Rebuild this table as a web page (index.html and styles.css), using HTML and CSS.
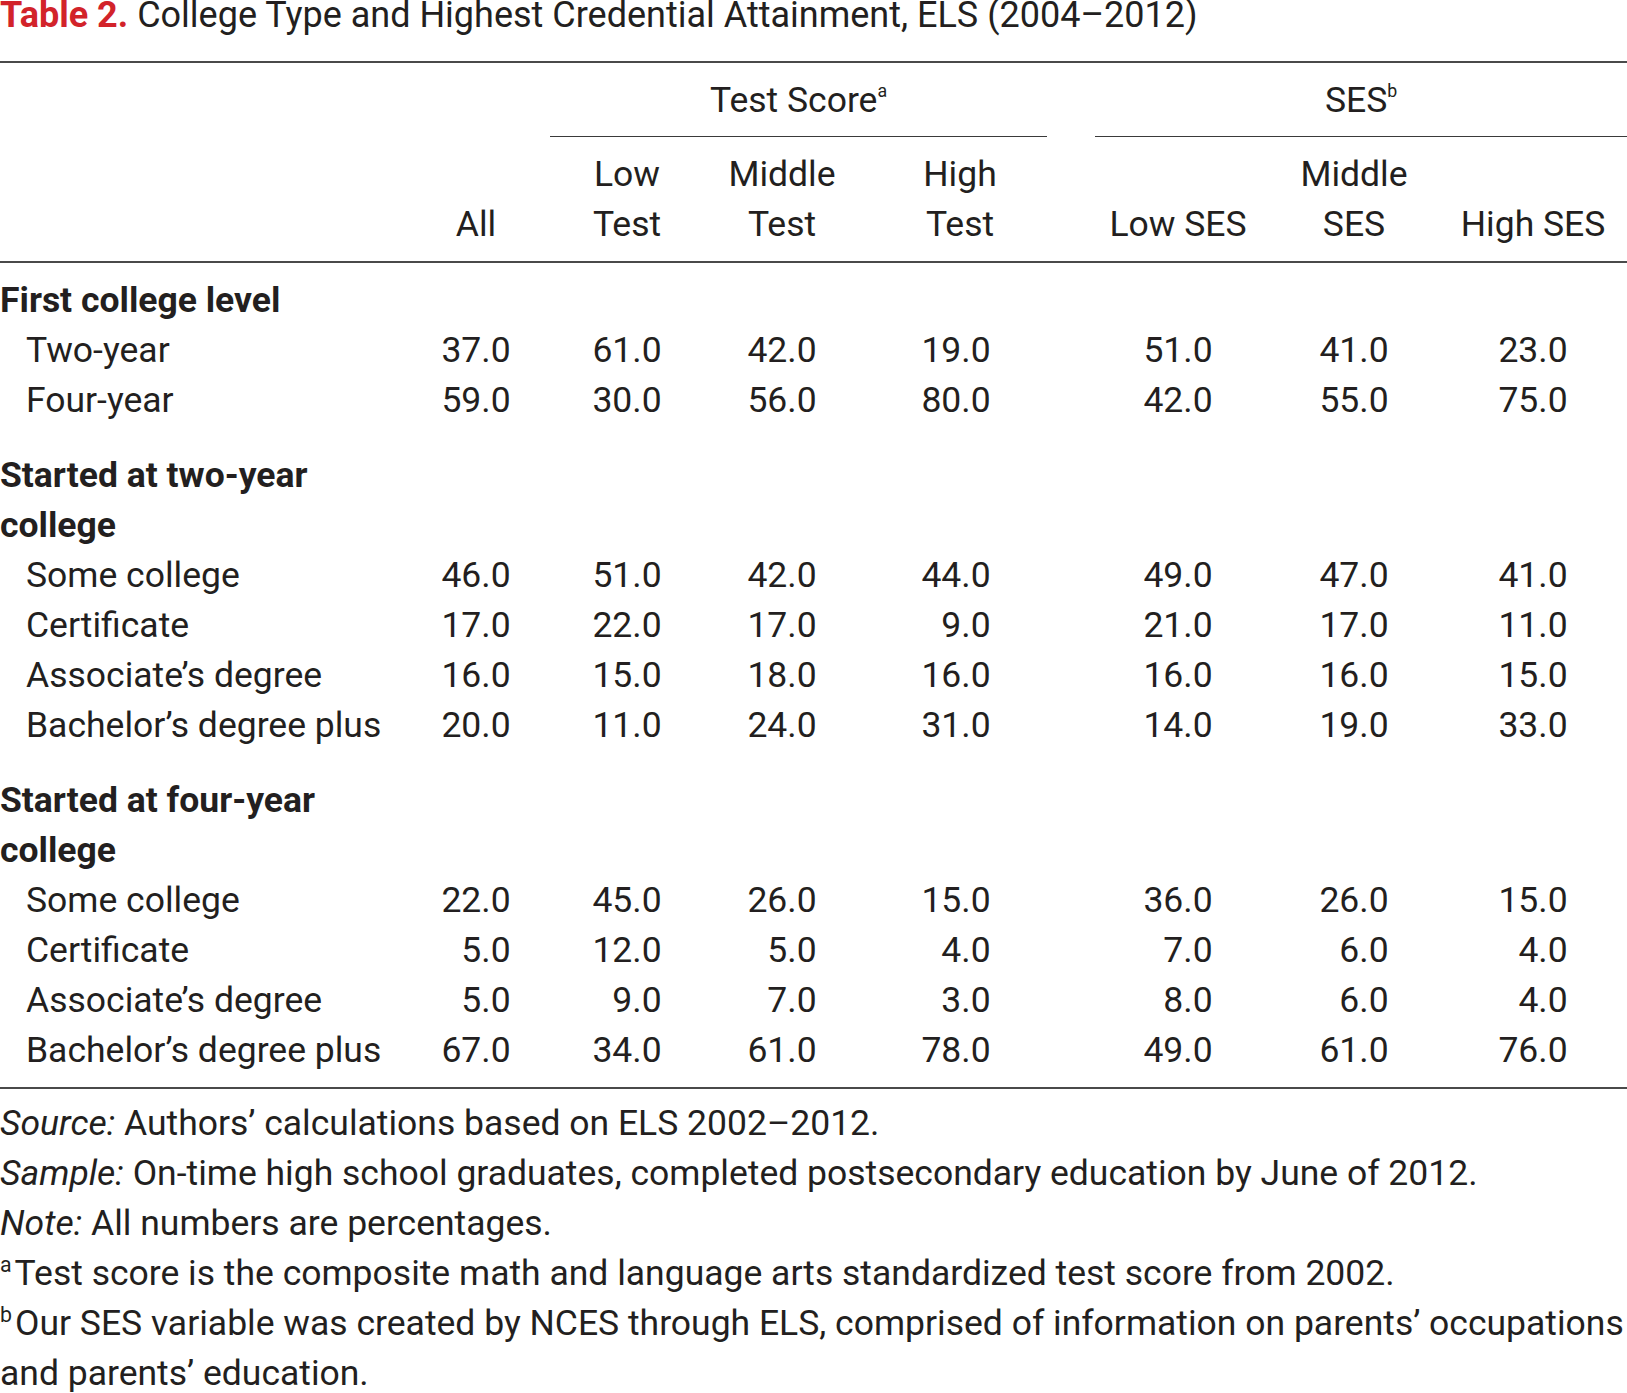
FILE: index.html
```html
<!DOCTYPE html>
<html>
<head>
<meta charset="utf-8">
<title>Table 2</title>
<link rel="stylesheet" href="styles.css">
</head>
<body>
<div class="page">
  <h1 class="title"><span class="label">Table 2.</span> College Type and Highest Credential Attainment, ELS (2004–2012)</h1>

  <table class="data">
    <colgroup>
      <col class="c-label">
      <col class="c-all">
      <col class="c-low">
      <col class="c-mid">
      <col class="c-high">
      <col class="c-gap">
      <col class="c-lses">
      <col class="c-mses">
      <col class="c-hses">
    </colgroup>
    <thead>
      <tr class="h1">
        <th></th>
        <th></th>
        <th colspan="3" class="grp"><span class="rule test">Test Score<sup>a</sup></span></th>
        <th></th>
        <th colspan="3" class="grp"><span class="rule">SES<sup>b</sup></span></th>
      </tr>
      <tr class="h2">
        <th></th>
        <th>All</th>
        <th>Low<br>Test</th>
        <th>Middle<br>Test</th>
        <th class="hi">High<br>Test</th>
        <th></th>
        <th>Low SES</th>
        <th>Middle<br>SES</th>
        <th class="last">High SES</th>
      </tr>
    </thead>
    <tbody>
      <tr class="group first">
        <td class="g">First college level</td><td colspan="8"></td>
      </tr>
      <tr>
        <td class="lab">Two-year</td>
        <td><span class="n">37.0</span></td><td><span class="n">61.0</span></td><td><span class="n">42.0</span></td><td><span class="n">19.0</span></td><td></td>
        <td><span class="n">51.0</span></td><td><span class="n">41.0</span></td><td class="last"><span class="n">23.0</span></td>
      </tr>
      <tr>
        <td class="lab">Four-year</td>
        <td><span class="n">59.0</span></td><td><span class="n">30.0</span></td><td><span class="n">56.0</span></td><td><span class="n">80.0</span></td><td></td>
        <td><span class="n">42.0</span></td><td><span class="n">55.0</span></td><td class="last"><span class="n">75.0</span></td>
      </tr>

      <tr class="group">
        <td class="g">Started at two-year college</td><td colspan="8"></td>
      </tr>
      <tr>
        <td class="lab">Some college</td>
        <td><span class="n">46.0</span></td><td><span class="n">51.0</span></td><td><span class="n">42.0</span></td><td><span class="n">44.0</span></td><td></td>
        <td><span class="n">49.0</span></td><td><span class="n">47.0</span></td><td class="last"><span class="n">41.0</span></td>
      </tr>
      <tr>
        <td class="lab">Certificate</td>
        <td><span class="n">17.0</span></td><td><span class="n">22.0</span></td><td><span class="n">17.0</span></td><td><span class="n">9.0</span></td><td></td>
        <td><span class="n">21.0</span></td><td><span class="n">17.0</span></td><td class="last"><span class="n">11.0</span></td>
      </tr>
      <tr>
        <td class="lab">Associate’s degree</td>
        <td><span class="n">16.0</span></td><td><span class="n">15.0</span></td><td><span class="n">18.0</span></td><td><span class="n">16.0</span></td><td></td>
        <td><span class="n">16.0</span></td><td><span class="n">16.0</span></td><td class="last"><span class="n">15.0</span></td>
      </tr>
      <tr>
        <td class="lab">Bachelor’s degree plus</td>
        <td><span class="n">20.0</span></td><td><span class="n">11.0</span></td><td><span class="n">24.0</span></td><td><span class="n">31.0</span></td><td></td>
        <td><span class="n">14.0</span></td><td><span class="n">19.0</span></td><td class="last"><span class="n">33.0</span></td>
      </tr>

      <tr class="group">
        <td class="g">Started at four-year college</td><td colspan="8"></td>
      </tr>
      <tr>
        <td class="lab">Some college</td>
        <td><span class="n">22.0</span></td><td><span class="n">45.0</span></td><td><span class="n">26.0</span></td><td><span class="n">15.0</span></td><td></td>
        <td><span class="n">36.0</span></td><td><span class="n">26.0</span></td><td class="last"><span class="n">15.0</span></td>
      </tr>
      <tr>
        <td class="lab">Certificate</td>
        <td><span class="n">5.0</span></td><td><span class="n">12.0</span></td><td><span class="n">5.0</span></td><td><span class="n">4.0</span></td><td></td>
        <td><span class="n">7.0</span></td><td><span class="n">6.0</span></td><td class="last"><span class="n">4.0</span></td>
      </tr>
      <tr>
        <td class="lab">Associate’s degree</td>
        <td><span class="n">5.0</span></td><td><span class="n">9.0</span></td><td><span class="n">7.0</span></td><td><span class="n">3.0</span></td><td></td>
        <td><span class="n">8.0</span></td><td><span class="n">6.0</span></td><td class="last"><span class="n">4.0</span></td>
      </tr>
      <tr class="end">
        <td class="lab">Bachelor’s degree plus</td>
        <td><span class="n">67.0</span></td><td><span class="n">34.0</span></td><td><span class="n">61.0</span></td><td><span class="n">78.0</span></td><td></td>
        <td><span class="n">49.0</span></td><td><span class="n">61.0</span></td><td class="last"><span class="n">76.0</span></td>
      </tr>
    </tbody>
  </table>

  <div class="notes">
    <p><em>Source:</em> Authors’ calculations based on ELS 2002–2012.</p>
    <p><em>Sample:</em> On-time high school graduates, completed postsecondary education by June of 2012.</p>
    <p><em>Note:</em> All numbers are percentages.</p>
    <p><sup class="fn">a</sup>Test score is the composite math and language arts standardized test score from 2002.</p>
    <p><sup class="fn">b</sup>Our SES variable was created by NCES through ELS, comprised of information on parents’ occupations and parents’ education.</p>
  </div>
</div>
</body>
</html>
```
FILE: styles.css
```css
html, body {
  margin: 0;
  padding: 0;
  background: #ffffff;
  overflow: hidden;
}

.page {
  width: 1627px;
  font-family: Roboto, "Liberation Sans", sans-serif;
  font-size: 35.5px;
  color: #231f20;
}

.title {
  margin: 0 0 31px 0;
  font-size: 36px;
  font-weight: 400;
  line-height: 30px;
  white-space: nowrap;
}

.title .label {
  color: #d2232a;
  font-weight: 700;
}

.data {
  width: 1627px;
  table-layout: fixed;
  border-collapse: separate;
  border-spacing: 0;
  line-height: 50px;
}

.c-label { width: 402px; }
.c-all { width: 148px; }
.c-low { width: 154px; }
.c-mid { width: 156px; }
.c-high { width: 192px; }
.c-gap { width: 43px; }
.c-lses { width: 166px; }
.c-mses { width: 186px; }
.c-hses { width: 180px; }

.data th,
.data td {
  padding: 0;
  font-weight: 400;
  text-align: center;
  vertical-align: bottom;
}

.h1 th {
  border-top: 2px solid #4a4a4a;
  padding-top: 12px;
}

.grp .rule {
  display: block;
  border-bottom: 1.5px solid #3a3a3a;
  padding-bottom: 11px;
}

.grp .rule.test {
  margin-right: 5px;
}

.h2 th {
  padding-top: 12px;
  padding-bottom: 12px;
  border-bottom: 2px solid #4a4a4a;
  white-space: nowrap;
}

.h2 th.hi {
  padding-left: 8px;
}

.h2 th.last {
  padding-right: 8px;
}

sup {
  font-size: 0.5em;
  line-height: 0;
  vertical-align: 0.85em;
}

.group td {
  padding-top: 25px;
}

.group.first td {
  padding-top: 12px;
}

.data td.g {
  text-align: left;
  font-weight: 700;
  vertical-align: top;
}

.data td.lab {
  text-align: left;
  padding-left: 26px;
  white-space: nowrap;
}

.data td.last {
  padding-right: 8px;
}

.n {
  display: inline-block;
  width: 1.95em;
  text-align: right;
}

.end td {
  padding-bottom: 12px;
  border-bottom: 2px solid #4a4a4a;
}

.notes {
  margin-top: 9px;
  line-height: 50px;
}

.notes p {
  margin: 0;
}

.notes em {
  font-style: italic;
}

.notes sup.fn {
  font-size: 0.6em;
  vertical-align: 0.6em;
  margin-right: 3px;
}
```
